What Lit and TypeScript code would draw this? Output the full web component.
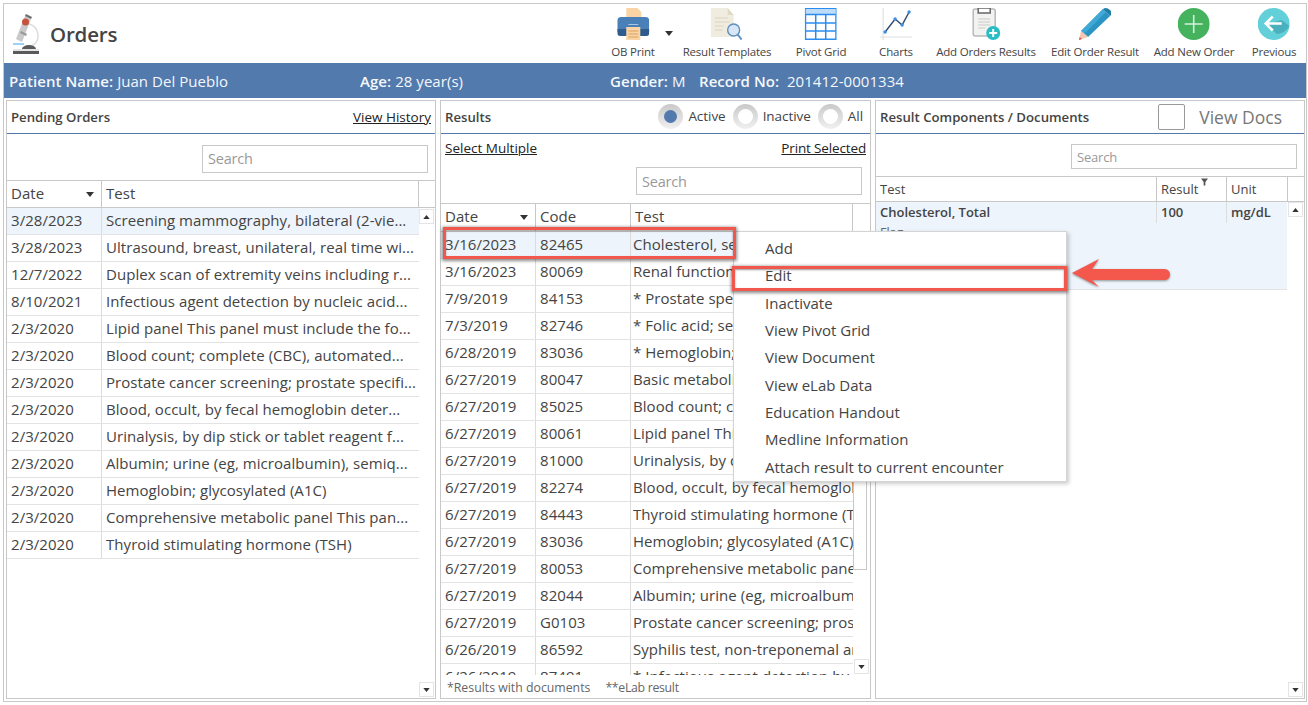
import { LitElement, html, css, svg } from "lit";
import { customElement } from "lit/decorators.js";

const pending: [string, string][] = [
  ["3/28/2023", "Screening mammography, bilateral (2-vie..."],
  ["3/28/2023", "Ultrasound, breast, unilateral, real time wi..."],
  ["12/7/2022", "Duplex scan of extremity veins including r..."],
  ["8/10/2021", "Infectious agent detection by nucleic acid..."],
  ["2/3/2020", "Lipid panel This panel must include the fo..."],
  ["2/3/2020", "Blood count; complete (CBC), automated..."],
  ["2/3/2020", "Prostate cancer screening; prostate specifi..."],
  ["2/3/2020", "Blood, occult, by fecal hemoglobin deter..."],
  ["2/3/2020", "Urinalysis, by dip stick or tablet reagent f..."],
  ["2/3/2020", "Albumin; urine (eg, microalbumin), semiq..."],
  ["2/3/2020", "Hemoglobin; glycosylated (A1C)"],
  ["2/3/2020", "Comprehensive metabolic panel This pan..."],
  ["2/3/2020", "Thyroid stimulating hormone (TSH)"],
];
const results: [string, string, string][] = [
  ["3/16/2023", "82465", "Cholesterol, serum or whole blood"],
  ["3/16/2023", "80069", "Renal function panel"],
  ["7/9/2019", "84153", "* Prostate specific antigen"],
  ["7/3/2019", "82746", "* Folic acid; serum"],
  ["6/28/2019", "83036", "* Hemoglobin; glycosylated"],
  ["6/27/2019", "80047", "Basic metabolic panel"],
  ["6/27/2019", "85025", "Blood count; complete"],
  ["6/27/2019", "80061", "Lipid panel This panel"],
  ["6/27/2019", "81000", "Urinalysis, by dip stick"],
  ["6/27/2019", "82274", "Blood, occult, by fecal hemoglobin"],
  ["6/27/2019", "84443", "Thyroid stimulating hormone (TSH)"],
  ["6/27/2019", "83036", "Hemoglobin; glycosylated (A1C)"],
  ["6/27/2019", "80053", "Comprehensive metabolic panel"],
  ["6/27/2019", "82044", "Albumin; urine (eg, microalbumin)"],
  ["6/27/2019", "G0103", "Prostate cancer screening; prostate"],
  ["6/26/2019", "86592", "Syphilis test, non-treponemal antibody"],
  ["6/26/2019", "87491", "* Infectious agent detection by nucleic"],
];
const menu = ["Add", "Edit", "Inactivate", "View Pivot Grid", "View Document", "View eLab Data", "Education Handout", "Medline Information", "Attach result to current encounter"];

const up = html`<svg class="tri" viewBox="0 0 8 5" width="8" height="5"><path d="M0 5 4 0 8 5z" fill="#333"/></svg>`;
const down = html`<svg class="tri" viewBox="0 0 8 5" width="8" height="5"><path d="M0 0 8 0 4 5z" fill="#333"/></svg>`;

const icons = {
  print: svg`<svg viewBox="0 0 32 32"><path d="M9 0h11l4 4v8H9z" fill="#fbd4a6"/><path d="M0 13a4 4 0 0 1 4-4h24a4 4 0 0 1 4 4v11H0z" fill="#4a80b8"/><path d="M0 21h32v4a3 3 0 0 1-3 3H3a3 3 0 0 1-3-3z" fill="#2f5c8c"/><rect x="9" y="19" width="14" height="13" fill="#fbd4a6"/><path d="M11 23h10M11 26h10M11 29h10" stroke="#d9a15f" stroke-width="1"/><rect x="11" y="16" width="10" height="1" fill="#a9c6e3"/></svg>`,
  template: svg`<svg viewBox="0 0 32 32"><path d="M0 0h17l6 7v22H0z" fill="#f0ecdf"/><path d="M17 0l6 7h-6z" fill="#dfd9c5"/><path d="M4 10h13M4 14h15M4 18h9M4 22h8" stroke="#d9d4c2" stroke-width="1.200"/><circle cx="23" cy="22" r="6" fill="#d6e6f5" stroke="#5f8fbe" stroke-width="1.400"/><path d="M27 26.500l4 5" stroke="#5f8fbe" stroke-width="2"/></svg>`,
  grid: svg`<svg viewBox="0 0 32 32"><rect x=".75" y=".75" width="30.500" height="30.500" fill="#fff" stroke="#2b8cf0" stroke-width="1.500"/><rect x="1" y="1" width="30" height="5" fill="#bcdcf8"/><path d="M1 6.500h30M1 15h30M1 23h30M11 6.500v25M21 6.500v25" stroke="#2b8cf0" stroke-width="1.500" fill="none"/></svg>`,
  chart: svg`<svg viewBox="0 0 32 32"><path d="M3 0v32M0 29h32" stroke="#e0e0dc" stroke-width="1.200"/><path d="M5 24l10-13 7 6 7-13" stroke="#33506e" stroke-width="1.500" fill="none"/><g fill="#3d8ee0"><circle cx="5" cy="24" r="1.700"/><circle cx="15" cy="11" r="1.700"/><circle cx="22" cy="17" r="1.700"/><circle cx="29" cy="4" r="1.700"/></g></svg>`,
  clip: svg`<svg viewBox="0 0 32 32"><rect x="3" y="1" width="22" height="27" rx="2" fill="#f2f2f0" stroke="#b9b9b9" stroke-width="1.500"/><path d="M8 0h12v5H8z" fill="#fff" stroke="#666" stroke-width="1.500"/><path d="M8 11h12M8 14h12M8 17h12M8 20h7" stroke="#c9c9c9" stroke-width="1.200"/><circle cx="23" cy="25" r="7" fill="#28bcc5"/><path d="M23 21v8M19 25h8" stroke="#fff" stroke-width="2"/></svg>`,
  pencil: svg`<svg viewBox="0 0 32 32"><path d="M24 1l7 7L9 29 2 23z" fill="#2b94c3"/><path d="M24 1l3 3L5 26l-3-3z" fill="#3fa8d6"/><path d="M26 0q3 0 5 2t1 5l-1 1-7-7z" fill="#1f7ea8"/><path d="M2 23l7 6-9 3z" fill="#f7c6b0"/><path d="M.5 29l2.500 2L0 32z" fill="#d85a45"/></svg>`,
  plus: svg`<svg viewBox="0 0 32 32"><circle cx="16" cy="16" r="16" fill="#45b35e"/><path d="M16 7v18M7 16h18" stroke="#d6efdb" stroke-width="1.600"/></svg>`,
  prev: svg`<svg viewBox="0 0 32 32"><circle cx="16" cy="16" r="16" fill="#62cfd9"/><path d="M9 16l10 10a16 16 0 0 0 12.700-8L24 12z" fill="#4bb0bd"/><path d="M8 15.500h16M15 8.500l-7 7 7 7" stroke="#fff" stroke-width="2.600" fill="none"/></svg>`,
  scope: svg`<svg width="30" height="42" viewBox="0 0 30 42"><path d="M19 11a12 12 0 0 1 3 22" fill="none" stroke="#dcdcdc" stroke-width="1.500"/><path d="M15 3l6 3-9 23-6-3z" fill="#c9c9c9"/><path d="M11 18l6 3-1 2-6-3z" fill="#9a9a9a"/><path d="M16 1l6 3-1 2-6-3z" fill="#6d6d6d"/><circle cx="15.500" cy="9" r="3.500" fill="#c7513c"/><path d="M3 31h11" stroke="#7cc0f2" stroke-width="1.500"/><path d="M12 36a7 4 0 0 1 14 0z" fill="#5a5a5a"/><rect x="3" y="36" width="26" height="2" fill="#e5e5e5"/><rect x="3" y="38" width="26" height="3" fill="#5a5a5a"/></svg>`,
};

@customElement("app-root")
export class AppRoot extends LitElement {
  static styles = css`
    :host { display: block; width: 1308px; height: 705px; font-family: "Open Sans", "Noto Sans", sans-serif; color: #444; overflow: hidden; background: #fff; }
    .tri { display: block; }
    .frame { margin: 3px 1px 0 3px; height: 699px; border: 1px solid #c8c8c8; box-sizing: border-box; position: relative; display: flex; flex-direction: column; }
    .top { height: 59px; flex: none; display: flex; align-items: flex-start; }
    .logo { margin: 9px 0 0 6px; display: flex; align-items: center; gap: 10px; width: 572px; }
    .logo b { font-size: 20.500px; font-weight: 600; color: #444; letter-spacing: -.2px; position: relative; top: 0; }
    .tools { margin-left: 20px; position: relative; flex: 1; height: 59px; }
    .tool { position: absolute; top: 4px; height: 55px; display: flex; flex-direction: column; align-items: center; transform: translateX(-50%); white-space: nowrap; font-size: 11.500px; letter-spacing: -.2px; color: #444; }
    .tool .ic { height: 32px; width: 32px; display: block; }
    .tool .ic svg { width: 32px; height: 32px; display: block; }
    .tool span { margin-top: 4px; }
    .caret { position: absolute; left: 63px; top: 27px; }
    .bar { height: 35px; flex: none; background: #527aad; color: #f4f7fb; font-size: 15px; letter-spacing: .05px; position: relative; }
    .bar span { position: absolute; top: 8px; white-space: nowrap; }
    .bar b { font-weight: 600; }
    .panels { flex: 1; display: flex; padding: 2px 0 0 2px; gap: 4px; min-height: 0; }
    .panel { width: 430px; height: 599px; flex: none; box-sizing: border-box; border: 1px solid #c8c8c8; display: flex; flex-direction: column; position: relative; overflow: hidden; }
    .panel.m { width: 431px; }
    .ph { height: 32px; flex: none; border-bottom: 1px solid #527aad; display: flex; align-items: center; justify-content: space-between; padding: 0 4px 0 4px; font-size: 13.200px; }
    .ph b { font-weight: 600; color: #444; }
    a { color: #222; text-decoration: underline; font-size: 13.500px; }
    a.narrow { letter-spacing: -.15px; }
    .sw { height: 46px; flex: none; box-sizing: border-box; padding: 11px 7px 0 0; display: flex; justify-content: flex-end; }
    .search { box-sizing: border-box; width: 226px; height: 28px; border: 1px solid #c8c8c8; padding: 5px 5px; font-size: 14.500px; color: #999; line-height: 18px; letter-spacing: -.2px; }
    .search.s1 { padding-top: 4px; }
    .search.s3 { height: 25px; font-size: 13px; padding: 3px 5px; }
    .sw.s3 { height: 42px; padding-top: 10px; }
    .links { height: 28px; flex: none; display: flex; justify-content: space-between; align-items: center; padding: 0 4px; }
    .sw2 { height: 41px; flex: none; display: flex; justify-content: flex-end; padding: 5px 8px 0 0; box-sizing: border-box; }
    .radios { display: flex; align-items: center; font-size: 13.500px; letter-spacing: -.05px; color: #444; margin-top: -2px; }
    .rad { width: 25px; height: 25px; border-radius: 50%; background: linear-gradient(#c9c9c9, #f0f0f0); display: flex; align-items: center; justify-content: center; margin: 0 5px 0 0; }
    .rad i { width: 15px; height: 15px; border-radius: 50%; background: #fff; display: block; }
    .rad.on i { background: #527aad; width: 13px; height: 13px; }
    .radios label { margin-right: 7px; }
    .radios label:last-child { margin-right: 3px; }
    .table { flex: 1; min-height: 0; position: relative; overflow: hidden; }
    .tr { display: grid; height: 27px; box-sizing: border-box; border-bottom: 1px solid #e3e3e3; font-size: 15px; letter-spacing: .05px; color: #444; line-height: 24px; }
    .tr > div { border-right: 1px solid #dcdcdc; padding-left: 4px; white-space: nowrap; overflow: hidden; position: relative; }
    .tr > div:last-child { border-right: 0; }
    .tr.t3 > div:last-child { padding-left: 2px; }
    .hd { border-top: 1px solid #c8c8c8; border-bottom: 1px solid #c8c8c8; height: 28px; line-height: 25px; }
    .hd.tall { height: 29px; line-height: 24px; }
    .hd > div { border-right: 1px solid #c8c8c8; }
    .hd > div:last-child { border-right: 0; }
    .hd .tri { position: absolute; right: 7px; top: 11px; }
    .sel { background: #edf4fb; }
    .body { position: absolute; left: 0; right: 17px; top: 28px; bottom: 0; overflow: hidden; }
    .body.left { right: 16px; }
    .body.mid { top: 29px; }
    .body.right { top: 26px; }
    .sb { position: absolute; right: 1px; width: 13px; height: 13px; border: 1px solid #e4e4e4; background: #fff; display: flex; align-items: center; justify-content: center; }
    .sb svg { width: 7px; height: 4px; }
    .sb.t1 { top: 29px; }
    .sb.t2 { top: 30px; }
    .sb.t3 { top: 26px; }
    .sb.bt { bottom: 1px; }
    .thumb { position: absolute; left: 412px; width: 14px; height: 319px; top: 48px; box-sizing: border-box; border: 1px solid #c8c8c8; background: #fff; }
    .foot { height: 23px; flex: none; font-size: 12.300px; color: #666; padding: 4px 0 0 6px; box-sizing: border-box; display: flex; gap: 15px; }
    .foot .e { letter-spacing: -.3px; }
    .doc { height: 67px; background: #edf4fb; border-bottom: 1px solid #e3e3e3; font-size: 12.500px; line-height: 20px; padding-left: 4px; color: #666; box-sizing: border-box; }
    .rc { font-size: 13px; color: #444; display: grid; grid-template-columns: 281px 70px 60px; height: 24px; line-height: 23px; box-sizing: border-box; }
    .rc > div { padding-left: 4px; border-right: 1px solid #dcdcdc; position: relative; white-space: nowrap; }
    .rc > div:last-child { border-right: 0; }
    .rc.h { border-top: 1px solid #c8c8c8; border-bottom: 1px solid #c8c8c8; height: 26px; line-height: 24px; grid-template-columns: 281px 70px 61px 1fr; }
    .rc.h > div:nth-child(3) { border-right: 1px solid #c8c8c8; }
    .rc.h > div { border-color: #c8c8c8; }
    .rc.b { font-weight: 600; background: #edf4fb; height: 21px; line-height: 20px; }
    .funnel { position: absolute; left: 44px; top: 1px; }
    .chk { width: 27px; height: 26px; border: 1px solid #999; border-radius: 2px; box-sizing: border-box; margin-right: 14px; }
    .vd { display: flex; align-items: center; font-size: 17.500px; color: #777; font-weight: 400; padding-right: 18px; }
    .menu { position: absolute; left: 729px; top: 227px; width: 334px; height: 251px; background: #fff; border: 1px solid #d4d4d4; box-shadow: 2px 2px 4px rgba(0, 0, 0, .2); box-sizing: border-box; padding-top: 3px; font-size: 15px; color: #444; }
    .menu div { height: 27.350px; line-height: 27px; padding-left: 31px; white-space: nowrap; }
    .hl { position: absolute; border: 3px solid #f0584e; box-shadow: 0 1px 3px 1px rgba(0, 0, 0, .45), inset 0 1px 2px rgba(0, 0, 0, .4); box-sizing: border-box; }
    .hl.row { left: 439px; top: 223px; width: 293px; height: 32px; }
    .hl.item { left: 728px; top: 262px; width: 335px; height: 25px; }
    .arrow { position: absolute; left: 1068px; top: 255px; overflow: visible; filter: drop-shadow(0 1px 1px rgba(0, 0, 0, .4)); }
  `;

  private tool(x: number, ic: unknown, label: string) {
    return html`<div class="tool" style="left:${x}px"><div class="ic">${ic}</div><span>${label}</span></div>`;
  }

  render() {
    const cols1 = "grid-template-columns: 95px 317px";
    const cols2 = "grid-template-columns: 95px 95px 222px";
    return html`
      <div class="frame">
        <div class="top">
          <div class="logo">${icons.scope}<b>Orders</b></div>
          <div class="tools">
            ${this.tool(31, icons.print, "OB Print")}
            <div class="caret">${down}</div>
            ${this.tool(125, icons.template, "Result Templates")}
            ${this.tool(219, icons.grid, "Pivot Grid")}
            ${this.tool(294, icons.chart, "Charts")}
            ${this.tool(384, icons.clip, "Add Orders Results")}
            ${this.tool(493, icons.pencil, "Edit Order Result")}
            ${this.tool(592, icons.plus, "Add New Order")}
            ${this.tool(672, icons.prev, "Previous")}
          </div>
        </div>
        <div class="bar">
          <span style="left:5px"><b>Patient Name:</b> Juan Del Pueblo</span>
          <span style="left:356px"><b>Age:</b> 28 year(s)</span>
          <span style="left:606px"><b>Gender:</b> M</span>
          <span style="left:695px"><b>Record No:</b> &nbsp;201412-0001334</span>
        </div>
        <div class="panels">
          <div class="panel">
            <div class="ph"><b>Pending Orders</b><a>View History</a></div>
            <div class="sw"><div class="search s1">Search</div></div>
            <div class="table">
              <div class="tr hd" style="grid-template-columns:95px 317px 16px"><div>Date${down}</div><div>Test</div><div></div></div>
              <div class="body left">
                ${pending.map((r, i) => html`<div class="tr ${i === 0 ? "sel" : ""}" style=${cols1}><div>${r[0]}</div><div>${r[1]}</div></div>`)}
              </div>
              <div class="sb t1">${up}</div>
              <div class="sb bt">${down}</div>
            </div>
          </div>
          <div class="panel m">
            <div class="ph"><b>Results</b>
              <div class="radios">
                <div class="rad on"><i></i></div><label>Active</label>
                <div class="rad"><i></i></div><label>Inactive</label>
                <div class="rad"><i></i></div><label>All</label>
              </div>
            </div>
            <div class="links"><a>Select Multiple</a><a class="narrow">Print Selected</a></div>
            <div class="sw2"><div class="search">Search</div></div>
            <div class="table">
              <div class="tr hd tall" style="grid-template-columns:95px 95px 222px 17px"><div>Date${down}</div><div>Code</div><div>Test</div><div></div></div>
              <div class="body mid">
                ${results.map((r, i) => html`<div class="tr t3 ${i === 0 ? "sel" : ""}" style=${cols2}><div>${r[0]}</div><div>${r[1]}</div><div>${r[2]}</div></div>`)}
              </div>
              <div class="thumb"></div>
              <div class="sb t2">${up}</div>
              <div class="sb bt">${down}</div>
            </div>
            <div class="foot"><span>*Results with documents</span><span class="e">**eLab result</span></div>
          </div>
          <div class="panel">
            <div class="ph"><b>Result Components / Documents</b><div class="vd"><div class="chk"></div>View Docs</div></div>
            <div class="sw s3"><div class="search s3">Search</div></div>
            <div class="table">
              <div class="rc h"><div>Test</div><div>Result<svg class="funnel" width="7" height="8" viewBox="0 0 8 8"><path d="M0 0h8L5 4v4H3V4z" fill="#555"/></svg></div><div>Unit</div><div></div></div>
              <div class="body right">
                <div class="rc b"><div>Cholesterol, Total</div><div>100</div><div>mg/dL</div></div>
                <div class="doc">Flag</div>
              </div>
              <div class="sb t3">${up}</div>
              <div class="sb bt">${down}</div>
            </div>
          </div>
        </div>
        <div class="menu">${menu.map((m) => html`<div>${m}</div>`)}</div>
        <div class="hl row"></div>
        <div class="hl item"></div>
        <svg class="arrow" width="98" height="28" viewBox="0 0 98 28"><path d="M0 14 27 0 20 10H92.500a5.500 5.500 0 0 1 0 11H20L27 28z" fill="#f4574b"/></svg>
      </div>
    `;
  }
}
